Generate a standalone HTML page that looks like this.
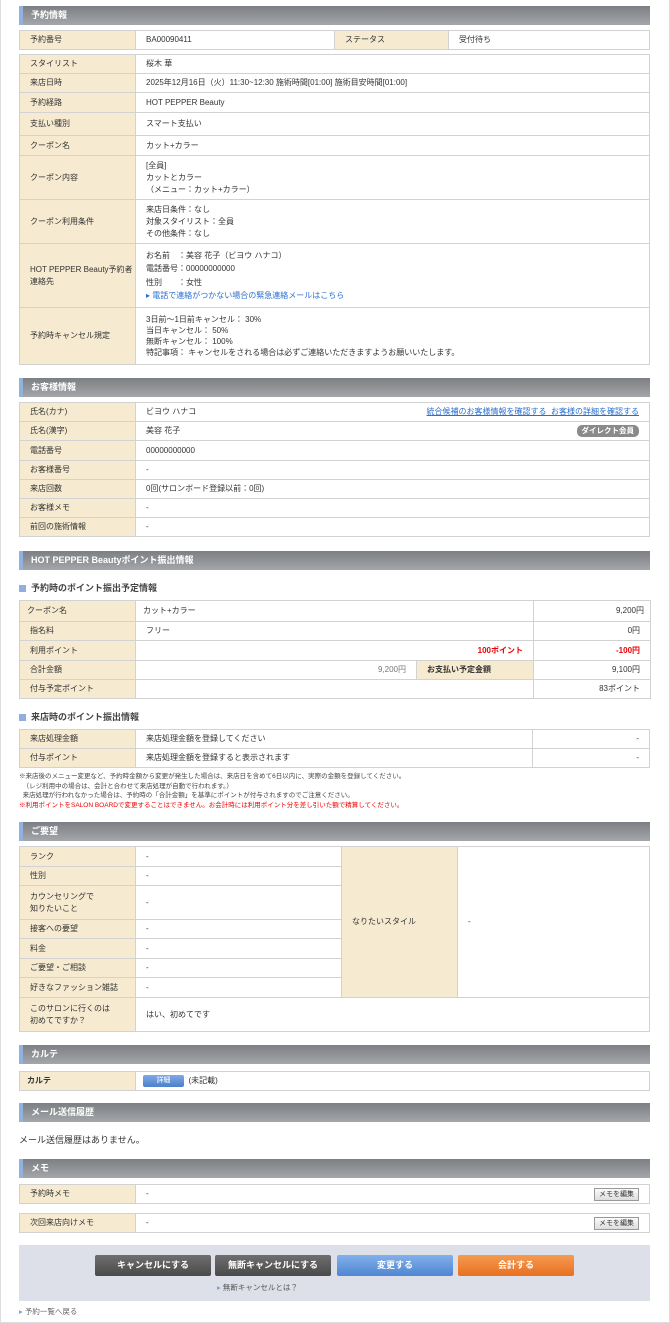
<!DOCTYPE html>
<html><head><meta charset="utf-8">
<style>
*{margin:0;padding:0;box-sizing:border-box}
body{width:670px;height:1323px;position:relative;background:#fff;font-family:"Liberation Sans","Noto Sans CJK JP",sans-serif;font-size:8px;color:#333;overflow:hidden}
.frame{position:absolute;left:0;top:0;width:670px;height:1323px;border:1px solid #ddd;border-top:none}
.h{position:absolute;left:19px;width:631px;height:19px;background:linear-gradient(#7c7f83,#a4a6aa);border-left:4px solid #92b2de;color:#fff;font-weight:bold;font-size:9px;line-height:19px;padding-left:8px}
table{position:absolute;left:19px;width:631px;border-collapse:collapse;table-layout:fixed}
td{border:1px solid #d2d2d2;padding:0 0 0 10px;vertical-align:middle;font-size:8px;line-height:12px;background:#fff}
td.l{background:#f6ead0;width:116px;padding-left:10px}
.r{text-align:right;padding-right:10px}
.a{color:#2a6fd0}
.sub{position:absolute;left:19px;font-size:9px;font-weight:bold;color:#444}
.sub:before{content:"";display:inline-block;width:7px;height:7px;background:#8fb0de;margin-right:5px;vertical-align:-1px}
.btn{position:absolute;top:1255px;width:116px;height:21px;border-radius:2px;color:#fff;font-weight:bold;font-size:9px;text-align:center;line-height:21px}
.sm{display:inline-block;border:1px solid #999;background:linear-gradient(#fafafa,#ddd);font-size:7px;padding:0 4px;line-height:11px;float:right;margin-right:10px}
</style></head><body>
<div class="frame"></div>

<div class="h" style="top:6px">予約情報</div>
<table style="top:30px"><tr style="height:19px"><td class="l">予約番号</td><td style="width:199px">BA00090411</td><td class="l" style="width:114px">ステータス</td><td>受付待ち</td></tr></table>

<table style="top:54px">
<tr style="height:19px"><td class="l">スタイリスト</td><td>桜木 華</td></tr>
<tr style="height:19px"><td class="l">来店日時</td><td>2025年12月16日（火）11:30~12:30 施術時間[01:00] 施術目安時間[01:00]</td></tr>
<tr style="height:20px"><td class="l">予約経路</td><td>HOT PEPPER Beauty</td></tr>
<tr style="height:23px"><td class="l">支払い種別</td><td>スマート支払い</td></tr>
<tr style="height:20px"><td class="l">クーポン名</td><td>カット+カラー</td></tr>
<tr style="height:44px"><td class="l">クーポン内容</td><td>[全員]<br>カットとカラー<br>（メニュー：カット+カラー）</td></tr>
<tr style="height:44px"><td class="l">クーポン利用条件</td><td>来店日条件：なし<br>対象スタイリスト：全員<br>その他条件：なし</td></tr>
<tr style="height:64px"><td class="l">HOT PEPPER Beauty予約者連絡先</td><td style="line-height:13.5px">お名前　：美容 花子（ビヨウ ハナコ）<br>電話番号：00000000000<br>性別　　：女性<br><span class="a">▸ 電話で連絡がつかない場合の緊急連絡メールはこちら</span></td></tr>
<tr style="height:57px"><td class="l">予約時キャンセル規定</td><td style="line-height:11px">3日前～1日前キャンセル： 30%<br>当日キャンセル： 50%<br>無断キャンセル： 100%<br>特記事項： キャンセルをされる場合は必ずご連絡いただきますようお願いいたします。</td></tr>
</table>

<div class="h" style="top:378px">お客様情報</div>
<table style="top:402px">
<tr style="height:19px"><td class="l">氏名(カナ)</td><td>ビヨウ ハナコ<span class="a" style="float:right;margin-right:10px;text-decoration:underline">統合候補のお客様情報を確認する&nbsp; お客様の詳細を確認する</span></td></tr>
<tr style="height:19px"><td class="l">氏名(漢字)</td><td>美容 花子<span style="float:right;margin-right:10px;background:#8a8a8a;color:#fff;border-radius:5px;padding:0 5px;font-size:7.5px;font-weight:bold;line-height:12px">ダイレクト会員</span></td></tr>
<tr style="height:20px"><td class="l">電話番号</td><td>00000000000</td></tr>
<tr style="height:19px"><td class="l">お客様番号</td><td>-</td></tr>
<tr style="height:19px"><td class="l">来店回数</td><td>0回(サロンボード登録以前：0回)</td></tr>
<tr style="height:19px"><td class="l">お客様メモ</td><td>-</td></tr>
<tr style="height:19px"><td class="l">前回の施術情報</td><td>-</td></tr>
</table>

<div class="h" style="top:551px">HOT PEPPER Beautyポイント振出情報</div>
<div class="sub" style="top:581px">予約時のポイント振出予定情報</div>
<table style="top:600px">
<colgroup><col style="width:116px"><col style="width:281px"><col style="width:117px"><col style="width:117px"></colgroup>
<tr style="height:21px"><td class="l" style="padding-left:7px">クーポン名</td><td colspan="2" style="padding-left:7px">カット+カラー</td><td class="r" style="padding-right:6px">9,200円</td></tr>
<tr style="height:19px"><td class="l">指名料</td><td colspan="2">フリー</td><td class="r">0円</td></tr>
<tr style="height:20px"><td class="l">利用ポイント</td><td colspan="2" class="r" style="color:#e00;font-weight:bold">100ポイント</td><td class="r" style="color:#e00;font-weight:bold">-100円</td></tr>
<tr style="height:19px"><td class="l">合計金額</td><td class="r" style="color:#777">9,200円</td><td class="l" style="font-weight:bold">お支払い予定金額</td><td class="r">9,100円</td></tr>
<tr style="height:19px"><td class="l">付与予定ポイント</td><td colspan="2"></td><td class="r">83ポイント</td></tr>
</table>

<div class="sub" style="top:710px">来店時のポイント振出情報</div>
<table style="top:729px">
<tr style="height:19px"><td class="l">来店処理金額</td><td>来店処理金額を登録してください</td><td class="r" style="width:117px">-</td></tr>
<tr style="height:19px"><td class="l">付与ポイント</td><td>来店処理金額を登録すると表示されます</td><td class="r">-</td></tr>
</table>
<div style="position:absolute;left:19px;top:772px;font-size:6.5px;line-height:9.5px;color:#444">※来店後のメニュー変更など、予約時金額から変更が発生した場合は、来店日を含めて6日以内に、実際の金額を登録してください。<br>&nbsp;&nbsp;（レジ利用中の場合は、会計と合わせて来店処理が自動で行われます。）<br>&nbsp;&nbsp;来店処理が行われなかった場合は、予約時の「合計金額」を基準にポイントが付与されますのでご注意ください。<br><span style="color:#e00">※利用ポイントをSALON BOARDで変更することはできません。お会計時には利用ポイント分を差し引いた額で精算してください。</span></div>

<div class="h" style="top:822px">ご要望</div>
<table style="top:846px">
<tr style="height:20px"><td class="l">ランク</td><td style="width:206px">-</td><td class="l" rowspan="7" style="width:116px">なりたいスタイル</td><td rowspan="7">-</td></tr>
<tr style="height:19px"><td class="l">性別</td><td>-</td></tr>
<tr style="height:34px"><td class="l">カウンセリングで<br>知りたいこと</td><td>-</td></tr>
<tr style="height:19px"><td class="l">接客への要望</td><td>-</td></tr>
<tr style="height:20px"><td class="l">料金</td><td>-</td></tr>
<tr style="height:19px"><td class="l">ご要望・ご相談</td><td>-</td></tr>
<tr style="height:20px"><td class="l">好きなファッション雑誌</td><td>-</td></tr>
<tr style="height:34px"><td class="l">このサロンに行くのは<br>初めてですか？</td><td colspan="3">はい、初めてです</td></tr>
</table>

<div class="h" style="top:1045px">カルテ</div>
<table style="top:1071px"><tr style="height:19px"><td class="l" style="padding-left:7px;font-weight:bold">カルテ</td><td style="padding-left:7px"><span style="display:inline-block;width:41px;height:12px;background:linear-gradient(#7fa9e4,#4c80cc);border-radius:2px;color:#fff;text-align:center;line-height:12px;font-size:7px;vertical-align:middle">詳細</span>&nbsp; (未記載)</td></tr></table>

<div class="h" style="top:1103px">メール送信履歴</div>
<div style="position:absolute;left:19px;top:1133px;font-size:9px">メール送信履歴はありません。</div>

<div class="h" style="top:1159px">メモ</div>
<table style="top:1184px"><tr style="height:19px"><td class="l">予約時メモ</td><td>-<span class="sm">メモを編集</span></td></tr></table>
<table style="top:1213px"><tr style="height:19px"><td class="l">次回来店向けメモ</td><td>-<span class="sm">メモを編集</span></td></tr></table>

<div style="position:absolute;left:19px;top:1245px;width:631px;height:56px;background:#dde0e8"></div>
<div class="btn" style="left:95px;background:linear-gradient(#6e6e6e,#4a4a4a)">キャンセルにする</div>
<div class="btn" style="left:215px;background:linear-gradient(#6e6e6e,#4a4a4a)">無断キャンセルにする</div>
<div class="btn" style="left:337px;background:linear-gradient(#82b0ea,#4e86d2)">変更する</div>
<div class="btn" style="left:458px;background:linear-gradient(#f59a52,#e8701f)">会計する</div>
<div style="position:absolute;left:217px;top:1282px;font-size:7.5px;color:#555"><span style="color:#7aa0d8">▸</span> 無断キャンセルとは？</div>
<div style="position:absolute;left:19px;top:1306px;font-size:7.5px;color:#666"><span style="color:#7aa0d8">▸</span> 予約一覧へ戻る</div>
</body></html>
